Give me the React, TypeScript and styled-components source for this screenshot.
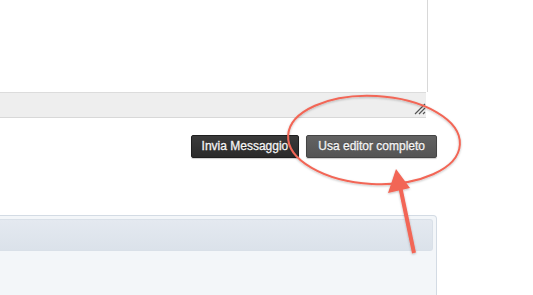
import { FC } from "react";
import styled, { createGlobalStyle } from "styled-components";

const GlobalStyle = createGlobalStyle`
    html, body {
        margin: 0;
        padding: 0;
        background: #fff;
        overflow: hidden;
    }
    body {
        font-family: "Liberation Sans", Arial, sans-serif;
    }
`

const App: FC = () => {
    return <Page>
        <GlobalStyle />
        <Column>
            <Editor>
                <TextArea />
                <StatusBar>
                    <Grip viewBox="0 0 12 12">
                        <path d="M1 11 L11 1 M5 11 L11 5 M9 11 L11 9" stroke="#555" strokeWidth="1.2" />
                    </Grip>
                </StatusBar>
            </Editor>
            <Actions>
                <Button tone="dark">Invia Messaggio</Button>
                <Button tone="mid">Usa editor completo</Button>
            </Actions>
            <Panel>
                <PanelHead />
            </Panel>
        </Column>
        <Markup viewBox="0 0 533 295">
            <defs>
                <filter id="soft" x="-10%" y="-10%" width="120%" height="120%">
                    <feDropShadow dx="0" dy="1" stdDeviation="0.8" floodColor="#000" floodOpacity="0.25" />
                </filter>
            </defs>
            <g filter="url(#soft)">
                <ellipse cx="374" cy="140" rx="86" ry="44" fill="none" stroke="#f26656" strokeWidth="2" transform="rotate(3 374 140)" />
                <line x1="414" y1="253" x2="400" y2="186" stroke="#f26656" strokeWidth="4" />
                <polygon points="396,169 388,193 410,188" fill="#f26656" />
            </g>
        </Markup>
    </Page>
}

export default App

const Page = styled.div`
    position: relative;
    width: 533px;
    height: 295px;
    overflow: hidden;
`

const Column = styled.div`
    width: 437px;
    display: flex;
    flex-direction: column;
`

const Editor = styled.div`
    width: 428px;
    display: flex;
    flex-direction: column;
`

const TextArea = styled.div`
    height: 92px;
    background: #fff;
    border-right: 1px solid #d8d8d8;
    box-sizing: border-box;
`

const StatusBar = styled.div`
    width: 426px;
    height: 26px;
    background: #eeeeee;
    border-top: 1px solid #dcdcdc;
    border-bottom: 1px solid #d8d8d8;
    box-sizing: border-box;
    position: relative;
`

const Grip = styled.svg`
    position: absolute;
    right: 0;
    bottom: 2px;
    width: 12px;
    height: 12px;
`

const Actions = styled.div`
    display: flex;
    justify-content: flex-end;
    gap: 7px;
    margin-top: 17px;
`

const Button = styled.button<{ tone: "dark" | "mid" }>`
    height: 23px;
    padding: 0 ${p => p.tone === "dark" ? "10px" : "11px"};
    border: 1px solid ${p => p.tone === "dark" ? "#1e1e1e" : "#444"};
    border-radius: 2px;
    background: ${p => p.tone === "dark"
        ? "linear-gradient(#3a3a3a, #2a2a2a)"
        : "linear-gradient(#626262, #545454)"};
    color: #f4f4f4;
    font-family: "Liberation Sans", Arial, sans-serif;
    font-size: 12px;
    line-height: 21px;
    -webkit-text-stroke: 0.3px #f4f4f4;
    text-shadow: 0 -1px 0 rgba(0, 0, 0, 0.4);
    box-shadow: 0 1px 1px rgba(0, 0, 0, 0.2);
    cursor: pointer;
`

const Panel = styled.div`
    margin-top: 57px;
    height: 90px;
    background: #f3f6f9;
    border: 1px solid #d3dbe4;
    border-left: none;
    border-top-right-radius: 4px;
    padding: 3px 3px 0 0;
    box-sizing: border-box;
`

const PanelHead = styled.div`
    height: 32px;
    background: linear-gradient(#e4e9f0, #dbe2ea);
    border: 1px solid #d9e0e8;
    border-left: none;
    border-radius: 0 3px 3px 0;
    box-sizing: border-box;
`

const Markup = styled.svg`
    position: absolute;
    left: 0;
    top: 0;
    width: 533px;
    height: 295px;
    pointer-events: none;
`
